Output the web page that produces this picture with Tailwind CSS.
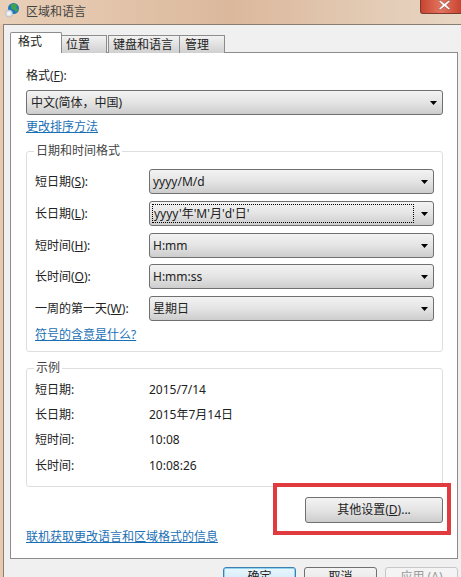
<!DOCTYPE html>
<html lang="zh-CN">
<head>
  <meta charset="UTF-8">
  <title>区域和语言</title>
  <script src="https://cdn.jsdelivr.net/npm/@tailwindcss/browser@4"></script>
</head>
<body class="bg-[#e6c9ae] font-['Noto_Sans','Noto_Sans_CJK_SC',sans-serif] text-[12px] text-[#222]">
<div class="relative w-[461px] h-[577px] overflow-hidden">

  <!-- Title bar -->
  <div class="relative flex items-center h-[24px] pl-[5px] bg-gradient-to-r from-[#e9d0b8] via-[#dbb89c] to-[#e8d6c4]">
    <svg class="w-[19px] h-[19px]" viewBox="0 0 19 19">
      <circle cx="8.500" cy="5.500" r="5.500" fill="#1f74c4"/>
      <path d="M5.500 1.500l4-1 3 2-1.500 2.500 2.500 1.500-2.500 3-1.500-2.500-3-1z" fill="#3fa24c"/>
      <circle cx="4" cy="10.500" r="3.500" fill="#dfe4e8" stroke="#a9b4bc" stroke-width=".7"/>
      <circle cx="4" cy="10.500" r="1.500" fill="#f6f7f8"/>
    </svg>
    <span class="ml-[2px] leading-[20px] text-[#444]">区域和语言</span>
    <div class="absolute right-0 top-0 flex justify-center w-[41px] h-[14px] pl-[6px] rounded-bl-[3px] border-l border-b border-[#7a3a30] bg-gradient-to-r from-[#c8432f] via-[#e2745f] to-[#c8432f]">
      <svg class="w-[11px] h-[10px]" viewBox="0 0 11 10"><path d="M1 0l4.500 3.500 4.500-3.500 1 1.500-3.500 3.500 3.500 3.500-1 1.500-4.500-3.500-4.500 3.500-1-1.500 3.500-3.500-3.500-3.500z" fill="#fff" stroke="#7a3a30" stroke-width=".5"/></svg>
    </div>
  </div>

  <!-- Dialog body -->
  <div class="ml-[3px] h-[553px] pl-[6px] pt-[7px] border-l border-t border-[#8a7d72] bg-[#f0f0f0]">

    <!-- Tabs -->
    <div class="relative z-10 flex items-end h-[21px] leading-[17px]">
      <div class="w-[52px] h-[21px] pl-[7px] bg-white border border-b-0 border-[#8c8c8c] rounded-t-[2px]">格式</div>
      <div class="w-[45px] h-[18px] pl-[4px] border-r border-t border-[#8c8c8c] bg-gradient-to-b from-[#f2f2f2] to-[#d0d0d0]">位置</div>
      <div class="w-[72px] h-[18px] ml-[1px] pl-[4px] border-x border-t border-[#8c8c8c] bg-gradient-to-b from-[#f2f2f2] to-[#d0d0d0]">键盘和语言</div>
      <div class="w-[45px] h-[18px] pl-[5px] border-r border-t border-[#8c8c8c] bg-gradient-to-b from-[#f2f2f2] to-[#d0d0d0]">管理</div>
    </div>

    <!-- Tab page -->
    <div class="relative w-[448px] h-[507px] -mt-px pl-[15px] pt-[15px] bg-white border border-[#8c8c8c]">
      <div class="h-[16px] leading-[16px]">格式(<span class="underline">F</span>):</div>

      <div class="relative flex items-center justify-between w-[417px] h-[25px] mt-[6px] px-[4px] border border-[#707070] rounded-[3px] bg-gradient-to-b from-[#f3f3f3] via-[#e4e4e4] to-[#cdcdcd]">
        <span>中文(简体，中国)</span>
        <svg class="w-[7px] h-[4px] mr-[1px]" viewBox="0 0 7 4"><path d="M0 0h7l-3.500 4z" fill="#000"/></svg>
      </div>
      <div class="h-[16px] mt-[4px] leading-[16px] text-[#1a6fb5] underline">更改排序方法</div>

      <!-- Date and time formats -->
      <div class="relative w-[417px] h-[201px] mt-[16px] px-[8px] pt-[17px] border border-[#dcdfe2] rounded-[3px]">
        <div class="absolute left-[7px] -top-[9px] px-[2px] bg-white leading-[16px] text-[#444]">日期和时间格式</div>

        <div class="flex items-center h-[25px]">
          <span class="w-[114px]">短日期(<span class="underline">S</span>):</span>
          <div class="flex items-center justify-between w-[285px] h-[25px] pl-[3px] pr-[4px] border border-[#707070] rounded-[3px] bg-gradient-to-b from-[#f3f3f3] via-[#e4e4e4] to-[#cdcdcd]">
            <span>yyyy/M/d</span>
            <svg class="w-[7px] h-[4px] mr-[1px]" viewBox="0 0 7 4"><path d="M0 0h7l-3.500 4z" fill="#000"/></svg>
          </div>
        </div>
        <div class="flex items-center h-[25px] mt-[7px]">
          <span class="w-[114px]">长日期(<span class="underline">L</span>):</span>
          <div class="flex items-center justify-between w-[285px] h-[25px] pl-[2px] pr-[4px] border border-[#707070] rounded-[3px] bg-gradient-to-b from-[#f3f3f3] via-[#e4e4e4] to-[#cdcdcd]">
            <span class="w-[262px] h-[19px] pl-[1px] leading-[17px] border border-dotted border-black">yyyy'年'M'月'd'日'</span>
            <svg class="w-[7px] h-[4px] mr-[1px]" viewBox="0 0 7 4"><path d="M0 0h7l-3.500 4z" fill="#000"/></svg>
          </div>
        </div>
        <div class="flex items-center h-[25px] mt-[7px]">
          <span class="w-[114px]">短时间(<span class="underline">H</span>):</span>
          <div class="flex items-center justify-between w-[285px] h-[25px] pl-[3px] pr-[4px] border border-[#707070] rounded-[3px] bg-gradient-to-b from-[#f3f3f3] via-[#e4e4e4] to-[#cdcdcd]">
            <span>H:mm</span>
            <svg class="w-[7px] h-[4px] mr-[1px]" viewBox="0 0 7 4"><path d="M0 0h7l-3.500 4z" fill="#000"/></svg>
          </div>
        </div>
        <div class="flex items-center h-[25px] mt-[6px]">
          <span class="w-[114px]">长时间(<span class="underline">O</span>):</span>
          <div class="flex items-center justify-between w-[285px] h-[25px] pl-[3px] pr-[4px] border border-[#707070] rounded-[3px] bg-gradient-to-b from-[#f3f3f3] via-[#e4e4e4] to-[#cdcdcd]">
            <span>H:mm:ss</span>
            <svg class="w-[7px] h-[4px] mr-[1px]" viewBox="0 0 7 4"><path d="M0 0h7l-3.500 4z" fill="#000"/></svg>
          </div>
        </div>
        <div class="flex items-center h-[25px] mt-[7px]">
          <span class="w-[114px]">一周的第一天(<span class="underline">W</span>):</span>
          <div class="flex items-center justify-between w-[285px] h-[25px] pl-[3px] pr-[4px] border border-[#707070] rounded-[3px] bg-gradient-to-b from-[#f3f3f3] via-[#e4e4e4] to-[#cdcdcd]">
            <span>星期日</span>
            <svg class="w-[7px] h-[4px] mr-[1px]" viewBox="0 0 7 4"><path d="M0 0h7l-3.500 4z" fill="#000"/></svg>
          </div>
        </div>
        <div class="h-[16px] mt-[6px] leading-[16px] text-[#1a6fb5] underline">符号的含意是什么?</div>
      </div>

      <!-- Examples -->
      <div class="relative w-[417px] h-[119px] mt-[16px] px-[8px] pt-[12px] border border-[#dcdfe2] rounded-[3px]">
        <div class="absolute left-[7px] -top-[9px] px-[2px] bg-white leading-[16px] text-[#444]">示例</div>
        <div class="flex h-[18px] leading-[18px]"><span class="w-[114px]">短日期:</span><span>2015/7/14</span></div>
        <div class="flex h-[18px] mt-[7px] leading-[18px]"><span class="w-[114px]">长日期:</span><span>2015年7月14日</span></div>
        <div class="flex h-[18px] mt-[7px] leading-[18px]"><span class="w-[114px]">短时间:</span><span>10:08</span></div>
        <div class="flex h-[18px] mt-[8px] leading-[18px]"><span class="w-[114px]">长时间:</span><span>10:08:26</span></div>
      </div>

      <div class="flex justify-end w-[417px] mt-[10px]">
        <div class="flex items-center justify-center w-[138px] h-[26px] border border-[#707070] rounded-[3px] bg-gradient-to-b from-[#f3f3f3] via-[#e4e4e4] to-[#cdcdcd]">其他设置(<span class="underline">D</span>)...</div>
      </div>
      <div class="h-[16px] mt-[6px] leading-[16px] text-[#1a6fb5] underline">联机获取更改语言和区域格式的信息</div>
    </div>

    <!-- Dialog buttons -->
    <div class="flex mt-[8px] ml-[213px]">
      <div class="flex justify-center w-[73px] h-[24px] pt-[1px] leading-[15px] border border-[#3c7fb1] rounded-[3px] bg-gradient-to-b from-[#eaf6fd] to-[#bfe3f7] shadow-[inset_0_0_0_1px_#8fd3f0]">确定</div>
      <div class="flex justify-center w-[73px] h-[24px] ml-[8px] pt-[1px] leading-[15px] border border-[#707070] rounded-[3px] bg-gradient-to-b from-[#f3f3f3] to-[#e2e2e2]">取消</div>
      <div class="flex justify-center w-[73px] h-[24px] ml-[8px] pt-[1px] leading-[15px] text-[#9a9a9a] border border-[#c4c8ca] rounded-[3px] bg-[#f4f4f4]">应用 (A)</div>
    </div>
  </div>

  <!-- Red annotation around the button -->
  <div class="absolute left-[273px] top-[483px] w-[178px] h-[52px] border-[4px] border-[#e03c3f]"></div>
</div>
</body>
</html>
